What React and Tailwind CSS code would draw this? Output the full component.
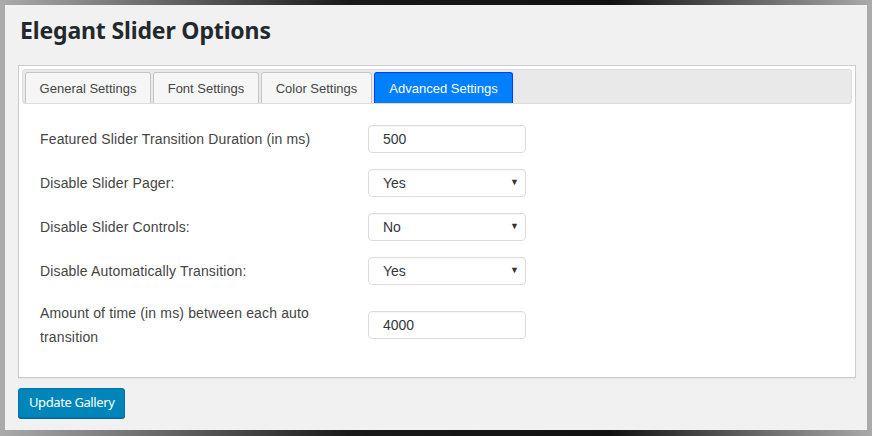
import React from "react";

const rows = [
  { label: "Featured Slider Transition Duration (in ms)", type: "input", value: "500" },
  { label: "Disable Slider Pager:", type: "select", value: "Yes" },
  { label: "Disable Slider Controls:", type: "select", value: "No" },
  { label: "Disable Automatically Transition:", type: "select", value: "Yes" },
  { label: "Amount of time (in ms) between each auto transition", type: "input", value: "4000" },
];

const tabs = [
  { t: "General Settings", w: "w-[126px]" },
  { t: "Font Settings", w: "w-[106px]" },
  { t: "Color Settings", w: "w-[111px]" },
  { t: "Advanced Settings", w: "w-[139px]", active: true },
];

function Field({ type, value }) {
  return (
    <div className="flex h-[28px] w-[158px] items-center justify-between rounded-[4px] border border-[#dddddd] bg-white pl-[14px] pr-[6px] text-[14px] text-[#32373c] shadow-[inset_0_1px_2px_rgba(0,0,0,0.04)]">
      <span>{value}</span>
      {type === "select" && <span className="text-[9px] text-[#333]">▼</span>}
    </div>
  );
}

export default function App() {
  return (
    <div className="flex h-[436px] w-[872px] flex-col bg-[#aaaaaa] font-['Liberation_Sans',Arial,sans-serif]">
      <div className="h-[5px] w-full bg-[linear-gradient(to_right,#aaaaaa_0%,#1a1a1a_40%,#111111_70%,#aaaaaa_100%)]" />
      <div className="flex flex-1 px-[5px]">
        <div className="flex flex-1 flex-col bg-[#f1f1f1]">
          <h1 className="ml-[15px] mt-[10px] font-['Noto_Sans',sans-serif] text-[23px] font-bold leading-[30px] tracking-[-0.15px] text-[#23282d]">
            Elegant Slider Options
          </h1>
          <div className="ml-[13px] mr-[11px] mt-[20px] h-[313px] border border-[#cccccc] bg-white p-[3px] shadow-[0_1px_1px_rgba(0,0,0,0.04)]">
            <div className="flex h-[35px] items-end gap-[2px] rounded-[3px] border border-[#dddddd] bg-[#e9e9e9] pl-[2px]">
              {tabs.map(({ t, w, active }) => (
                <div
                  key={t}
                  className={
                    "flex h-[31px] items-center justify-center rounded-t-[3px] border border-b-0 pt-[2px] text-[13px] " +
                    w +
                    (active
                      ? " border-[#003eff] bg-[#007fff] text-white"
                      : " border-[#c5c5c5] bg-[#f6f6f6] text-[#454545]")
                  }
                >
                  {t}
                </div>
              ))}
            </div>
            <div className="flex flex-col pl-[18px] pt-[13px]">
              {rows.map((r) => (
                <div key={r.label} className="grid grid-cols-[328px_158px] items-center py-[8px]">
                  <div className="pr-[40px] text-[14px] leading-[24px] tracking-[0.15px] text-[#444444]">{r.label}</div>
                  <Field type={r.type} value={r.value} />
                </div>
              ))}
            </div>
          </div>
          <div className="ml-[13px] mt-[10px]">
            <button className="h-[30px] rounded-[3px] border border-[#0073aa] bg-[#0085ba] px-[10px] font-['Noto_Sans',sans-serif] text-[13px] tracking-[-0.4px] text-white shadow-[0_1px_0_#006799]">
              Update Gallery
            </button>
          </div>
        </div>
      </div>
      <div className="h-[6px] w-full bg-[linear-gradient(to_right,#aaaaaa_0%,#1a1a1a_40%,#111111_70%,#aaaaaa_100%)]" />
    </div>
  );
}
